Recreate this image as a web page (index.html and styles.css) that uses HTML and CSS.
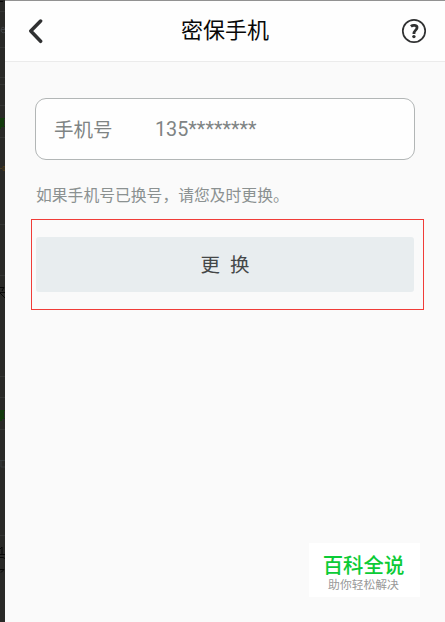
FILE: index.html
```
<!DOCTYPE html>
<html lang="zh-CN">
<head>
    <meta charset="UTF-8">
    <meta name="viewport" content="width=device-width, initial-scale=1.0">
    <title>密保手机</title>
    <link rel="stylesheet" href="styles.css">
</head>
<body>
    <!-- dimmed page under the panel -->
    <svg class="backdrop" width="5" height="622" viewBox="0 0 5 622" aria-hidden="true">
        <path d="M0 11.5h5M0 47.5h5M0 77.5h5M0 84.5h5M0 105.5h5M0 137.5h5M0 224.5h5M0 275.5h5M0 376.5h5M0 397.5h5M0 429.5h5M0 535.5h5" stroke="#343533"/>
        <path d="M0 1.5h3" stroke="#080808"/>
        <path d="M0 118h5v1h-1v7h1v1h-4v2h-1zM0 410h5v1h-1v7h1v1h-3v2h-2z" fill="#123a0c"/>
        <path d="M0 287.500h4M0 292.500h5M0 293l5 5M4 287l-2 4" stroke="#080808" fill="none"/>
        <path d="M0 549l2-2v7M0 554.500h5M0 557.500h3l2 1M0 569.500h4l-3 3" stroke="#080808" fill="none"/>
        <path d="M1 28.500q2-3 4 0v1h-4q0 4 4 3" stroke="#414448" fill="none"/>
        <path d="M0 168.500h2M3 166.500h2v4h-2z" stroke="#4a3a1c" fill="none"/>
        <path d="M0 460.500h5M1 461v6h4" stroke="#363b3c" fill="none"/>
    </svg>

    <div class="panel">
        <header class="header">
            <svg class="back" width="16" height="26" viewBox="0 0 16 26">
                <path d="M13.600 3L3.800 13L13.600 23.300"/>
            </svg>
            <h1>密保手机</h1>
            <svg class="help" width="26" height="26" viewBox="0 0 26 26">
                <circle cx="13" cy="13" r="11.200"/>
                <path d="M9.900 8.400C11.800 6.900 16.300 6.900 16 9.800C15.800 12.200 12.900 12.300 12.900 15.900"/>
                <circle class="dot" cx="12.900" cy="18.600" r="1.700"/>
            </svg>
        </header>

        <main>
            <div class="phone">
                <span class="phone-label">手机号</span>
                <span class="phone-number">135********</span>
            </div>
            <p class="tip">如果手机号已换号，请您及时更换。</p>
            <div class="highlight">
                <button class="change">更 换</button>
            </div>
        </main>

        <div class="watermark">
            <div class="watermark-name">百科全说</div>
            <div class="watermark-text">助你轻松解决</div>
        </div>
    </div>
</body>
</html>
```

FILE: styles.css
```
* {
    box-sizing: border-box;
}
body {
    margin: 0;
    display: flex;
    height: 622px;
    overflow: hidden;
    background-color: #292927;
    font-family: Roboto, "Noto Sans CJK SC", sans-serif;
}
.backdrop {
    flex: none;
    display: block;
}
.panel {
    flex: 1;
    position: relative;
    background-color: #fafafa;
    border-top: 1px solid #929292;
}
.header {
    height: 61px;
    display: flex;
    align-items: center;
    justify-content: space-between;
    padding: 0 18px 0 22px;
    background-color: #fefefe;
    border-bottom: 1px solid #ebebeb;
}
.header h1 {
    margin: 0;
    padding: 0 0 0 6px;
    font-size: 22px;
    line-height: 32px;
    font-weight: 400;
    color: #080808;
}
.back {
    fill: none;
    stroke: #303132;
    stroke-width: 3.5;
    stroke-linecap: round;
    stroke-linejoin: round;
}
.help {
    fill: none;
    stroke: #303132;
    stroke-width: 1.7;
}
.help path {
    stroke-width: 2.8;
}
.help .dot {
    fill: #303132;
    stroke: none;
}
main {
    padding: 36px 21px 0 26px;
}
.phone {
    display: flex;
    align-items: center;
    width: 380px;
    height: 62px;
    margin-left: 4px;
    padding: 0 0 1px 18px;
    background-color: #fefefe;
    border: 1px solid #b2b6b6;
    border-radius: 11px;
    color: #7f8484;
}
.phone-label {
    width: 101px;
    padding-bottom: 1px;
    font-size: 19.5px;
}
.phone-number {
    padding-top: 2px;
    font-size: 19.8px;
}
.tip {
    margin: 24px 0 0 5px;
    font-size: 15.8px;
    line-height: 24px;
    color: #8b9191;
    white-space: nowrap;
}
.highlight {
    width: 393px;
    height: 91px;
    margin-top: 11px;
    padding: 17px 0 0 4px;
    border: 1px solid #f03c38;
}
.change {
    display: block;
    width: 378px;
    height: 55px;
    padding: 0 0 2px;
    border: none;
    border-radius: 3px;
    background-color: #e8edef;
    color: #444747;
    font-family: inherit;
    font-size: 19.5px;
    word-spacing: 5px;
}
/* sits over the bottom right corner of the panel */
.watermark {
    position: absolute;
    right: 25px;
    bottom: 25px;
    width: 111px;
    height: 54px;
    padding: 9px 2px 0 0;
    background-color: #fff;
    text-align: center;
}
.watermark-name {
    font-size: 20.4px;
    line-height: 28px;
    font-weight: 500;
    color: #0bcb36;
}
.watermark-text {
    margin-top: -1px;
    font-size: 11.8px;
    line-height: 12px;
    color: #999;
}
```
